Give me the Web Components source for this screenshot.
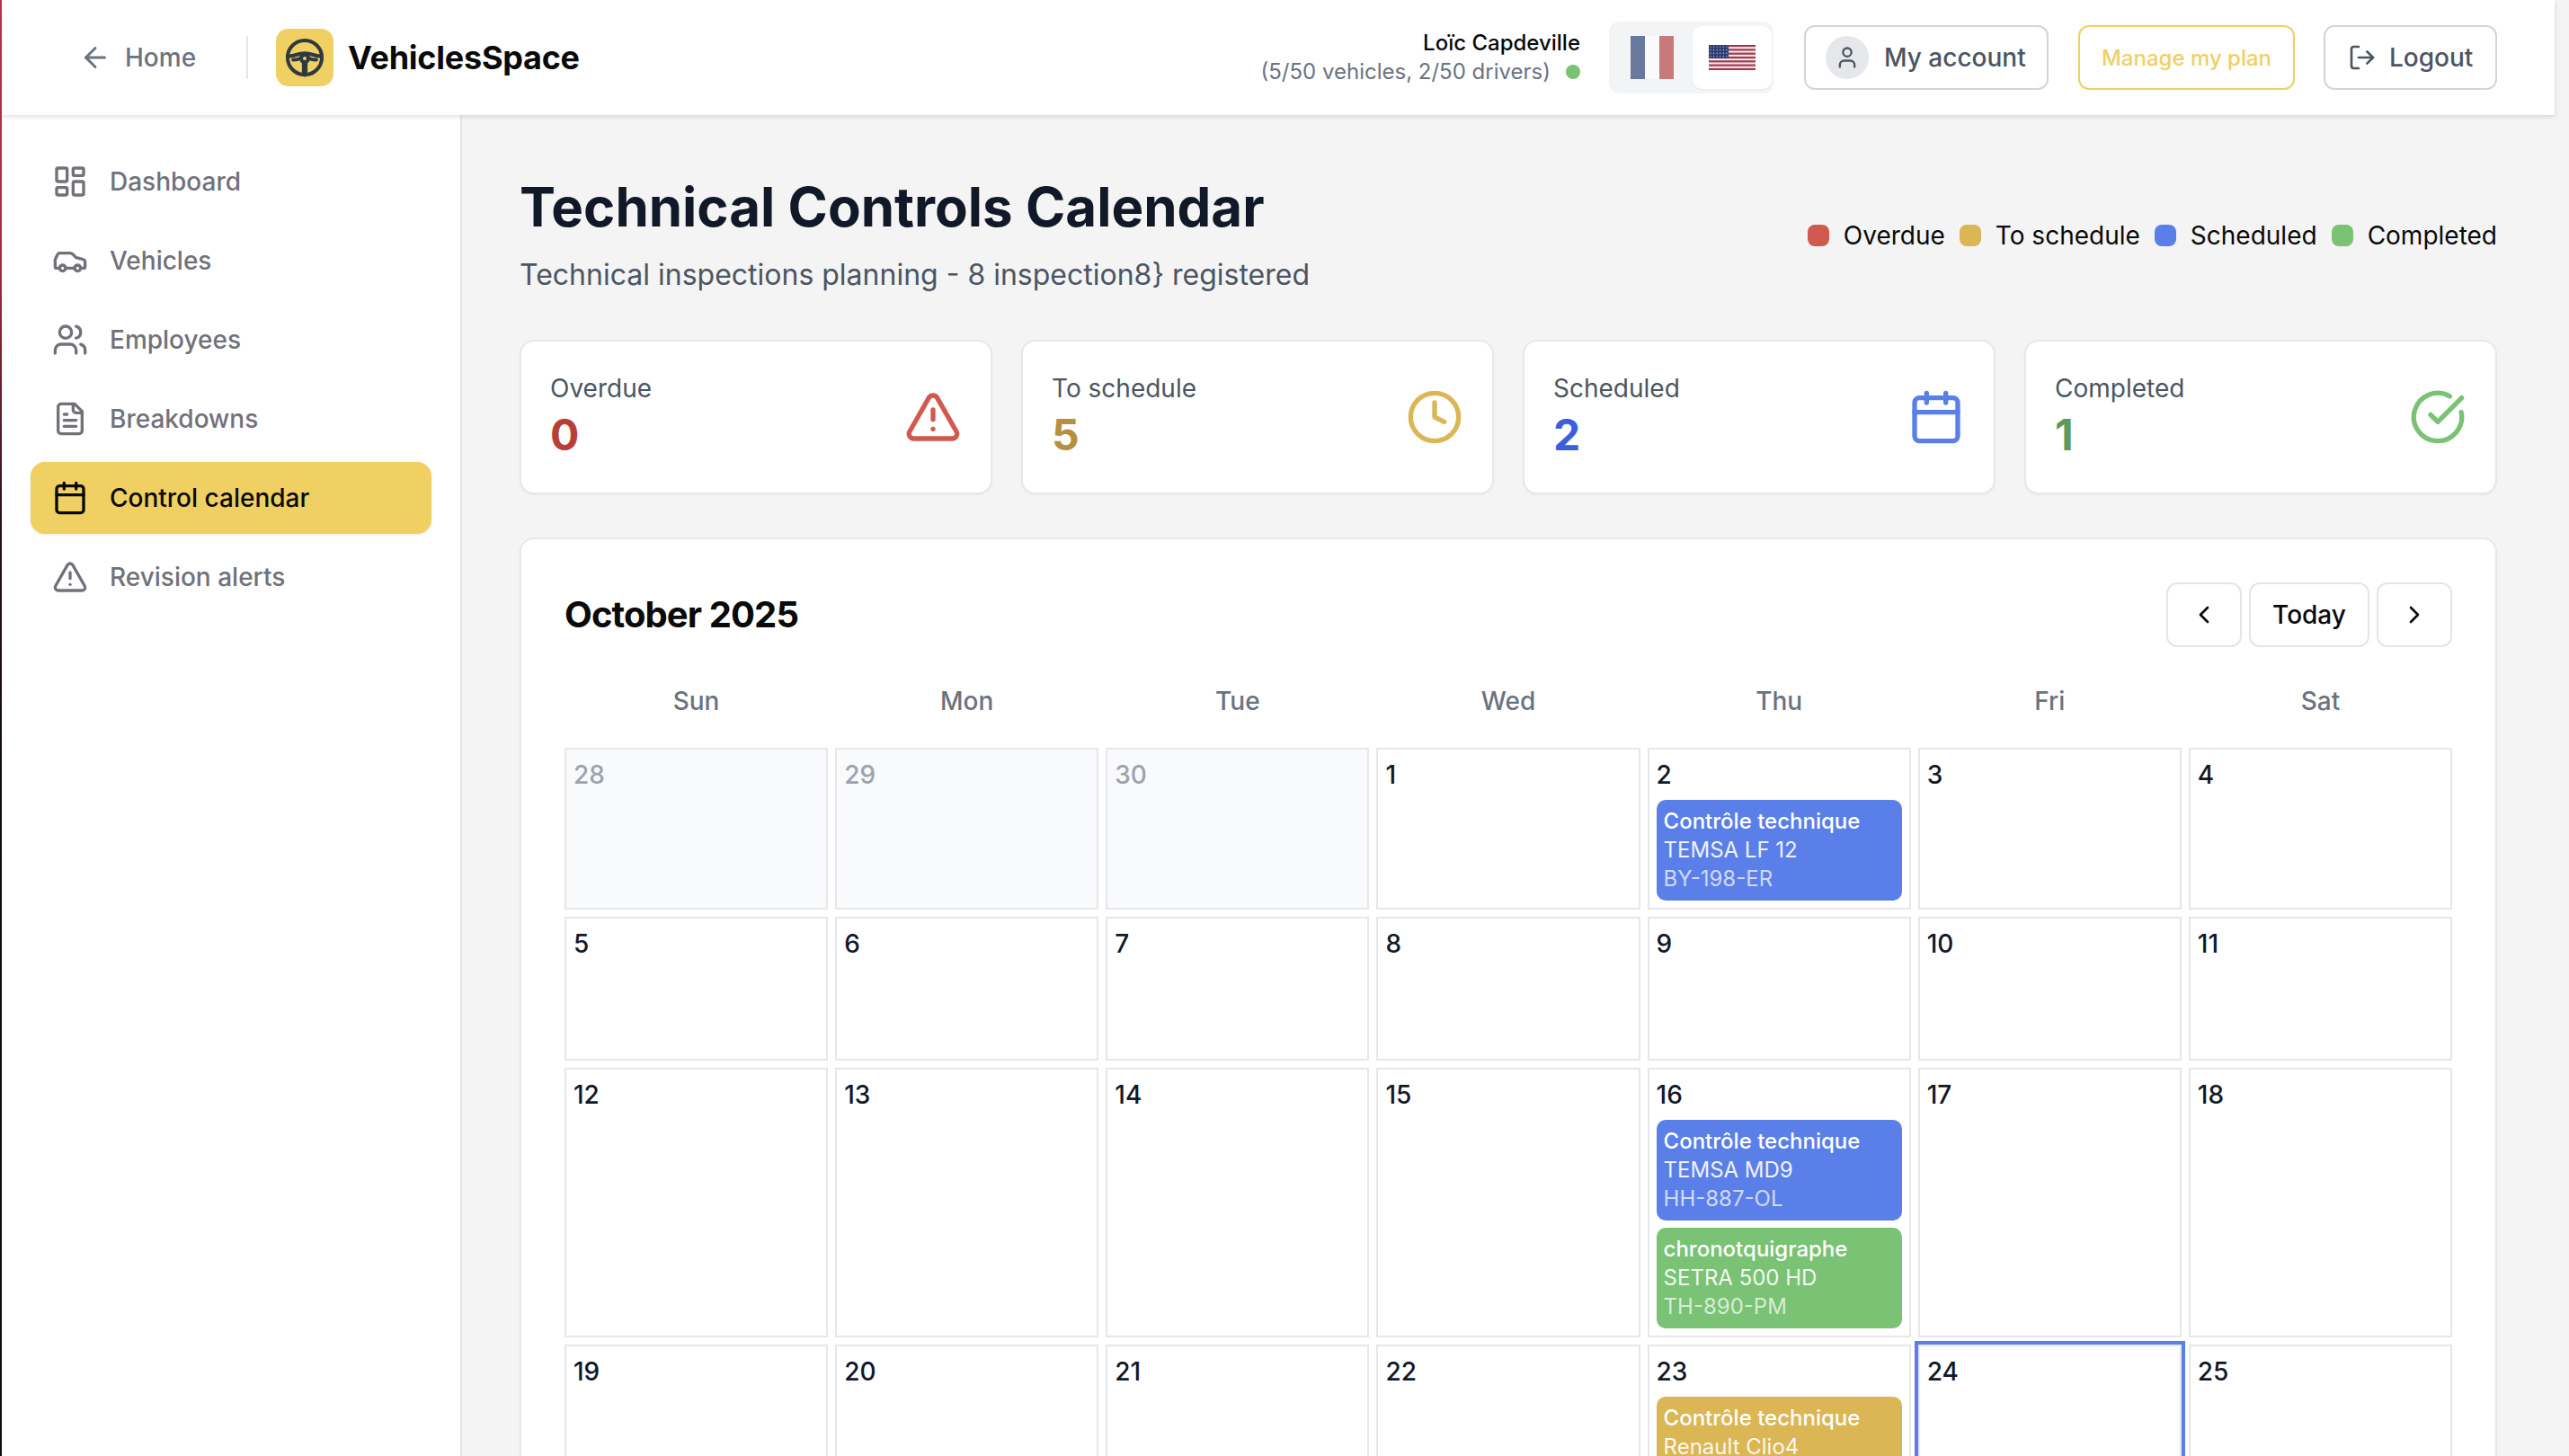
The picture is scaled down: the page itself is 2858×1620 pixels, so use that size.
<!DOCTYPE html>
<html lang="en">
<head>
<meta charset="utf-8">
<title>VehiclesSpace</title>
<style>
html, body { margin: 0; height: 100%; overflow: hidden; }
body { font-family: Inter, "Noto Sans", sans-serif; background: #f4f4f4; color: #0a0a0a; }
</style>
</head>
<body>
<vs-app>
	<vs-header slot="header" name="Loïc Capdeville" stats="(5/50 vehicles, 2/50 drivers)"></vs-header>
	<vs-sidebar slot="sidebar">
		<nav-item icon="dashboard">Dashboard</nav-item>
		<nav-item icon="car">Vehicles</nav-item>
		<nav-item icon="users">Employees</nav-item>
		<nav-item icon="file">Breakdowns</nav-item>
		<nav-item icon="calendar" active>Control calendar</nav-item>
		<nav-item icon="alert">Revision alerts</nav-item>
	</vs-sidebar>

	<page-head>
		<span slot="title">Technical Controls Calendar</span>
		<span slot="sub">Technical inspections planning - 8 inspection8} registered</span>
		<legend-item slot="legend" color="#d05a50">Overdue</legend-item>
		<legend-item slot="legend" color="#dbb655">To schedule</legend-item>
		<legend-item slot="legend" color="#5b7fe8">Scheduled</legend-item>
		<legend-item slot="legend" color="#7ac274">Completed</legend-item>
	</page-head>

	<stat-row>
		<stat-card label="Overdue" value="0" icon="alert" tone="#b93f36" accent="#d05a50"></stat-card>
		<stat-card label="To schedule" value="5" icon="clock" tone="#b88f3e" accent="#dbb655"></stat-card>
		<stat-card label="Scheduled" value="2" icon="calendar" tone="#3b5fdc" accent="#5b7fe8"></stat-card>
		<stat-card label="Completed" value="1" icon="check" tone="#5a9a5a" accent="#7ac274"></stat-card>
	</stat-row>

	<cal-month title-text="October 2025">
		<cal-day date="28" muted></cal-day>
		<cal-day date="29" muted></cal-day>
		<cal-day date="30" muted></cal-day>
		<cal-day date="1"></cal-day>
		<cal-day date="2">
			<cal-event color="#5b7fe8"><span slot="title">Contrôle technique</span><span slot="model">TEMSA LF 12</span><span slot="plate">BY-198-ER</span></cal-event>
		</cal-day>
		<cal-day date="3"></cal-day>
		<cal-day date="4"></cal-day>

		<cal-day date="5"></cal-day>
		<cal-day date="6"></cal-day>
		<cal-day date="7"></cal-day>
		<cal-day date="8"></cal-day>
		<cal-day date="9"></cal-day>
		<cal-day date="10"></cal-day>
		<cal-day date="11"></cal-day>

		<cal-day date="12"></cal-day>
		<cal-day date="13"></cal-day>
		<cal-day date="14"></cal-day>
		<cal-day date="15"></cal-day>
		<cal-day date="16">
			<cal-event color="#5b7fe8"><span slot="title">Contrôle technique</span><span slot="model">TEMSA MD9</span><span slot="plate">HH-887-OL</span></cal-event>
			<cal-event color="#7ac274"><span slot="title">chronotquigraphe</span><span slot="model">SETRA 500 HD</span><span slot="plate">TH-890-PM</span></cal-event>
		</cal-day>
		<cal-day date="17"></cal-day>
		<cal-day date="18"></cal-day>

		<cal-day date="19"></cal-day>
		<cal-day date="20"></cal-day>
		<cal-day date="21"></cal-day>
		<cal-day date="22"></cal-day>
		<cal-day date="23">
			<cal-event color="#dbb655"><span slot="title">Contrôle technique</span><span slot="model">Renault Clio4</span></cal-event>
		</cal-day>
		<cal-day date="24" today></cal-day>
		<cal-day date="25"></cal-day>
	</cal-month>
</vs-app>

<script>
const ICONS = {
	dashboard: '<rect x="3" y="3" width="7" height="9" rx="1"/><rect x="14" y="3" width="7" height="5" rx="1"/><rect x="14" y="12" width="7" height="9" rx="1"/><rect x="3" y="16" width="7" height="5" rx="1"/>',
	car: '<path d="M19 17h2c.6 0 1-.4 1-1v-3c0-.9-.7-1.7-1.5-1.9C18.7 10.6 16 10 16 10s-1.3-1.4-2.2-2.3c-.5-.4-1.1-.7-1.8-.7H5c-.6 0-1.1.4-1.4.9l-1.4 2.9A3.7 3.7 0 0 0 2 12v4c0 .6.4 1 1 1h2"/><circle cx="7" cy="17" r="2"/><path d="M9 17h6"/><circle cx="17" cy="17" r="2"/>',
	users: '<path d="M16 21v-2a4 4 0 0 0-4-4H6a4 4 0 0 0-4 4v2"/><circle cx="9" cy="7" r="4"/><path d="M22 21v-2a4 4 0 0 0-3-3.87"/><path d="M16 3.13a4 4 0 0 1 0 7.75"/>',
	file: '<path d="M15 2H6a2 2 0 0 0-2 2v16a2 2 0 0 0 2 2h12a2 2 0 0 0 2-2V7Z"/><path d="M14 2v4a2 2 0 0 0 2 2h4"/><path d="M10 9H8"/><path d="M16 13H8"/><path d="M16 17H8"/>',
	calendar: '<path d="M8 2v4"/><path d="M16 2v4"/><rect x="3" y="4" width="18" height="18" rx="2"/><path d="M3 10h18"/>',
	alert: '<path d="m21.73 18-8-14a2 2 0 0 0-3.48 0l-8 14A2 2 0 0 0 4 21h16a2 2 0 0 0 1.73-3"/><path d="M12 9v4"/><path d="M12 17h.01"/>',
	clock: '<circle cx="12" cy="12" r="10"/><polyline points="12 6 12 12 16 14"/>',
	check: '<path d="M21.801 10A10 10 0 1 1 17 3.335"/><path d="m9 11 3 3L22 4"/>',
	back: '<path d="m12 19-7-7 7-7"/><path d="M19 12H5"/>',
	user: '<path d="M19 21v-2a4 4 0 0 0-4-4H9a4 4 0 0 0-4 4v2"/><circle cx="12" cy="7" r="4"/>',
	logout: '<path d="M9 21H5a2 2 0 0 1-2-2V5a2 2 0 0 1 2-2h4"/><path d="m16 17 5-5-5-5"/><path d="M21 12H9"/>',
	prev: '<path d="m15 18-6-6 6-6"/>',
	next: '<path d="m9 18 6-6-6-6"/>'
};

class VsIcon extends HTMLElement {
	connectedCallback(){
		const size = this.getAttribute('size') || 40;
		const root = this.shadowRoot || this.attachShadow({mode: 'open'});
		root.innerHTML = `<style>:host{display:inline-flex;flex:none;width:${size}px;height:${size}px}</style>
		<svg width="${size}" height="${size}" viewBox="0 0 24 24" fill="none" stroke="currentColor" stroke-width="2" stroke-linecap="round" stroke-linejoin="round">${ICONS[this.getAttribute('name')]}</svg>`;
	}
}
customElements.define('vs-icon', VsIcon);

let appTemplate = document.createElement('template');
appTemplate.innerHTML = `
<style>
:host { display: flex; height: 1620px; overflow: hidden; position: relative; }
#edge { flex: none; width: 2px; background: linear-gradient(#c2334c 0, #a92a42 18%, #2a1018 36%, #0c0c10 60%); }
#frame { flex: 1; min-width: 0; display: flex; flex-direction: column; }
#body { flex: 1; min-height: 0; display: flex; }
#main { flex: 1; min-width: 0; padding: 66px 64px 0; }
#track { flex: none; width: 16px; }
#thumb { height: 1092px; background: #f3f3f3; border-radius: 8px; }
</style>
<div id="edge"></div>
<div id="frame">
	<slot name="header"></slot>
	<div id="body">
		<slot name="sidebar"></slot>
		<div id="main"><slot></slot></div>
	</div>
</div>
<div id="track"><div id="thumb"></div></div>`;

class VsApp extends HTMLElement {
	constructor() { super();
		this.attachShadow({mode: 'open'}).appendChild(appTemplate.content.cloneNode(true));
	}
}
customElements.define('vs-app', VsApp);

let headerTemplate = document.createElement('template');
headerTemplate.innerHTML = `
<style>
:host { display: flex; align-items: center; flex: none; height: 128px; background: #fff; box-shadow: 0 2px 5px rgba(0,0,0,.12); position: relative; z-index: 2; padding: 0 64px 0 86px; }
#home { display: flex; align-items: center; gap: 15px; font-size: 28px; font-weight: 500; color: #6b7280; }
#sep { width: 2px; height: 48px; background: #e5e7eb; margin: 0 31px 0 56px; }
#logo { width: 64px; height: 64px; border-radius: 14px; background: #f0cf63; display: flex; align-items: center; justify-content: center; }
#brand { font-size: 36px; font-weight: 700; letter-spacing: -0.25px; margin-left: 16px; color: #0a0a0a; }
#right { margin-left: auto; display: flex; align-items: center; }
#who { text-align: right; font-size: 24px; line-height: 32px; margin-right: 32px; }
#name { font-weight: 500; color: #0a0a0a; }
#stats { color: #6b7280; display: flex; align-items: center; gap: 17px; }
#dot { width: 16px; height: 16px; border-radius: 50%; background: #7ac274; }
#lang { width: 183px; height: 80px; box-sizing: border-box; padding: 5px 2px 5px 4px; background: #f3f4f6; border-radius: 12px; display: flex; margin-right: 34px; }
#lang div { flex: 1; display: flex; align-items: center; justify-content: center; border-radius: 10px; }
#fr { opacity: .6; }
#us { background: #fff; box-shadow: 0 1px 2px rgba(0,0,0,.06); }
.btn { box-sizing: border-box; height: 72px; border: 2px solid #d1d5db; border-radius: 12px; display: flex; align-items: center; font-size: 28px; font-weight: 500; color: #4b5563; background: #fff; }
#acct { width: 272px; padding-left: 22px; gap: 17px; margin-right: 33px; }
#avatar { width: 48px; height: 48px; border-radius: 50%; background: #e5e7eb; display: flex; align-items: center; justify-content: center; }
#plan { width: 241px; justify-content: center; border-color: #f0cf63; color: #f0cf63; font-size: 24px; margin-right: 32px; }
#out { width: 193px; padding-left: 25px; gap: 14px; }
</style>
<div id="home"><vs-icon name="back" size="36"></vs-icon><span>Home</span></div>
<div id="sep"></div>
<div id="logo">
	<svg width="44" height="44" viewBox="0 0 24 24" fill="none" stroke="#2f3a3f" stroke-width="2.2" stroke-linecap="round">
		<circle cx="12" cy="12" r="10.4"/>
		<path d="M2.2 11.2C6 11.4 7.5 9.4 12 9.4s6 2 9.8 1.8"/>
		<path d="M5 13.4c2.4 0 3.8-.4 4.6-1.2"/><path d="M19 13.4c-2.4 0-3.8-.4-4.6-1.2"/>
		<path d="M12 15v7" stroke-width="3.4"/>
		<circle cx="12" cy="12.6" r="2.2" fill="#f0cf63"/>
	</svg>
</div>
<div id="brand">VehiclesSpace</div>
<div id="right">
	<div id="who"><div id="name"></div><div id="stats"><span id="stxt"></span><span id="dot"></span></div></div>
	<div id="lang">
		<div id="fr"><svg width="48" height="48" viewBox="0 0 3 3"><rect width="1" height="3" fill="#0b2a63"/><rect x="1" width="1" height="3" fill="#fff"/><rect x="2" width="1" height="3" fill="#ad2a28"/></svg></div>
		<div id="us"><svg id="flag" width="52" height="28" viewBox="0 0 52 28"></svg></div>
	</div>
	<div class="btn" id="acct"><span id="avatar"><vs-icon name="user" size="28"></vs-icon></span><span>My account</span></div>
	<div class="btn" id="plan"><span>Manage my plan</span></div>
	<div class="btn" id="out"><vs-icon name="logout" size="32"></vs-icon><span>Logout</span></div>
</div>`;

class VsHeader extends HTMLElement {
	constructor() { super();
		this.attachShadow({mode: 'open'}).appendChild(headerTemplate.content.cloneNode(true));
	}
	connectedCallback(){
		const root = this.shadowRoot;
		root.querySelector('#name').textContent = this.getAttribute('name');
		root.querySelector('#stxt').textContent = this.getAttribute('stats');
		let flag = '<rect width="52" height="28" fill="#f4e9ea"/>';
		for(let i = 0; i < 7; i++) flag += `<rect y="${i*4.31}" width="52" height="2.15" fill="#a3374a"/>`;
		flag += '<rect width="22" height="15" fill="#2f3f73"/>';
		for(let y = 0; y < 4; y++) for(let x = 0; x < 6; x++) flag += `<circle cx="${2+x*3.6}" cy="${2+y*3.6}" r=".6" fill="#dfe3ee"/>`;
		root.querySelector('#flag').innerHTML = flag;
	}
}
customElements.define('vs-header', VsHeader);

let sidebarTemplate = document.createElement('template');
sidebarTemplate.innerHTML = `
<style>
:host { display: flex; flex-direction: column; gap: 8px; flex: none; width: 512px; box-sizing: border-box; padding: 34px 32px 0; background: #fff; border-right: 2px solid #e5e5e5; }
</style>
<slot></slot>`;

class VsSidebar extends HTMLElement {
	constructor() { super();
		this.attachShadow({mode: 'open'}).appendChild(sidebarTemplate.content.cloneNode(true));
	}
}
customElements.define('vs-sidebar', VsSidebar);

class NavItem extends HTMLElement {
	connectedCallback(){
		this.attachShadow({mode: 'open'}).innerHTML = `
		<style>
		:host { display: flex; align-items: center; gap: 24px; height: 80px; padding: 0 24px; border-radius: 16px; font-size: 28px; font-weight: 500; color: #71717a; }
		:host([active]) { background: #f0cf63; color: #0a0a0a; box-shadow: 0 1px 3px rgba(0,0,0,.1); }
		</style>
		<vs-icon name="${this.getAttribute('icon')}"></vs-icon><slot></slot>`;
	}
}
customElements.define('nav-item', NavItem);

let headTemplate = document.createElement('template');
headTemplate.innerHTML = `
<style>
:host { display: flex; align-items: center; justify-content: space-between; margin-bottom: 48px; }
h1 { margin: 0 0 16px; font-size: 60px; line-height: 72px; font-weight: 700; color: #111827; }
p { margin: 0; font-size: 32px; line-height: 48px; color: #4b5563; }
#legend { display: flex; gap: 16px; }
</style>
<div><h1><slot name="title"></slot></h1><p><slot name="sub"></slot></p></div>
<div id="legend"><slot name="legend"></slot></div>`;

class PageHead extends HTMLElement {
	constructor() { super();
		this.attachShadow({mode: 'open'}).appendChild(headTemplate.content.cloneNode(true));
	}
}
customElements.define('page-head', PageHead);

class LegendItem extends HTMLElement {
	connectedCallback(){
		this.attachShadow({mode: 'open'}).innerHTML = `
		<style>
		:host { display: flex; align-items: center; gap: 16px; font-size: 28px; line-height: 40px; color: #0a0a0a; }
		i { width: 24px; height: 24px; border-radius: 8px; background: ${this.getAttribute('color')}; }
		</style>
		<i></i><slot></slot>`;
	}
}
customElements.define('legend-item', LegendItem);

class StatRow extends HTMLElement {
	constructor() { super();
		this.attachShadow({mode: 'open'}).innerHTML = `
		<style>:host { display: grid; grid-template-columns: repeat(4, minmax(0,1fr)); gap: 32px; margin-bottom: 48px; }</style>
		<slot></slot>`;
	}
}
customElements.define('stat-row', StatRow);

class StatCard extends HTMLElement {
	connectedCallback(){
		const a = n => this.getAttribute(n);
		this.attachShadow({mode: 'open'}).innerHTML = `
		<style>
		:host { display: flex; align-items: center; justify-content: space-between; padding: 32px; background: #fff; border: 2px solid #e8e8e8; border-radius: 16px; box-shadow: 0 1px 2px rgba(0,0,0,.05); }
		#l { font-size: 28px; line-height: 40px; color: #4b5563; }
		#v { font-size: 48px; line-height: 64px; font-weight: 700; color: ${a('tone')}; }
		vs-icon { color: ${a('accent')}; }
		</style>
		<div><div id="l">${a('label')}</div><div id="v">${a('value')}</div></div>
		<vs-icon name="${a('icon')}" size="64"></vs-icon>`;
	}
}
customElements.define('stat-card', StatCard);

let monthTemplate = document.createElement('template');
monthTemplate.innerHTML = `
<style>
:host { display: block; padding: 48px 48px 0; background: #fff; border: 2px solid #e8e8e8; border-radius: 16px; box-shadow: 0 1px 2px rgba(0,0,0,.05); }
#top { display: flex; align-items: center; justify-content: space-between; margin-bottom: 24px; }
h2 { margin: 0; font-size: 40px; line-height: 56px; font-weight: 700; letter-spacing: -0.9px; color: #0a0a0a; }
#nav { display: flex; gap: 8px; }
.b { box-sizing: border-box; height: 72px; border: 2px solid #e5e5e5; border-radius: 12px; display: flex; align-items: center; justify-content: center; font-size: 28px; font-weight: 500; color: #0a0a0a; background: #fff; }
.ico { width: 84px; }
#today { width: 134px; }
#days, #grid { display: grid; grid-template-columns: repeat(7, minmax(0,1fr)); gap: 8px; }
#days { margin-bottom: 16px; }
#days div { padding: 16px 0; text-align: center; font-size: 28px; line-height: 40px; font-weight: 500; color: #6b7280; }
</style>
<div id="top">
	<h2 id="title"></h2>
	<div id="nav">
		<div class="b ico"><vs-icon name="prev" size="32"></vs-icon></div>
		<div class="b" id="today">Today</div>
		<div class="b ico"><vs-icon name="next" size="32"></vs-icon></div>
	</div>
</div>
<div id="days"><div>Sun</div><div>Mon</div><div>Tue</div><div>Wed</div><div>Thu</div><div>Fri</div><div>Sat</div></div>
<div id="grid"><slot></slot></div>`;

class CalMonth extends HTMLElement {
	constructor() { super();
		this.attachShadow({mode: 'open'}).appendChild(monthTemplate.content.cloneNode(true));
	}
	connectedCallback(){
		this.shadowRoot.querySelector('#title').textContent = this.getAttribute('title-text');
	}
}
customElements.define('cal-month', CalMonth);

class CalDay extends HTMLElement {
	connectedCallback(){
		this.attachShadow({mode: 'open'}).innerHTML = `
		<style>
		:host { display: flex; flex-direction: column; gap: 8px; box-sizing: border-box; min-height: 160px; padding: 8px; background: #fff; border: 2px solid #e5e7eb; color: #111827; }
		:host([muted]) { background: #f9fafb; color: #9ca3af; }
		:host([today]) { box-shadow: 0 0 0 4px #5b7fe8; }
		#d { font-size: 28px; line-height: 40px; font-weight: 500; }
		</style>
		<div id="d">${this.getAttribute('date')}</div><slot></slot>`;
	}
}
customElements.define('cal-day', CalDay);

class CalEvent extends HTMLElement {
	connectedCallback(){
		this.attachShadow({mode: 'open'}).innerHTML = `
		<style>
		:host { display: block; padding: 8px; border-radius: 10px; color: #fff; font-size: 24px; line-height: 32px; background: ${this.getAttribute('color')}; }
		#t { font-weight: 500; }
		#m { opacity: .9; }
		#p { opacity: .7; }
		</style>
		<div id="t"><slot name="title"></slot></div>
		<div id="m"><slot name="model"></slot></div>
		<div id="p"><slot name="plate"></slot></div>`;
	}
}
customElements.define('cal-event', CalEvent);
</script>
</body>
</html>
